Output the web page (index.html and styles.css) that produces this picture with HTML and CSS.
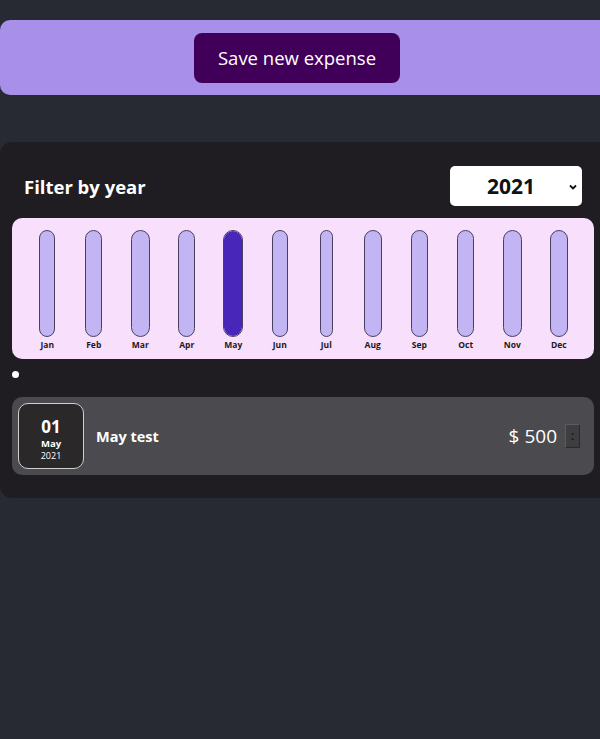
FILE: index.html
```html
<!DOCTYPE html>
<html lang="en">
<head>
<meta charset="utf-8">
<title>Expenses</title>
<link rel="stylesheet" href="styles.css">
</head>
<body>
<div class="new-expense">
  <button class="save-btn" type="button">Save new expense</button>
</div>

<div class="expenses">
  <div class="filter">
    <label class="filter-label">Filter by year</label>
    <div class="select-wrap">
      <select class="year-select">
        <option>2021</option>
      </select>
      <svg class="chev" width="10" height="8" viewBox="0 0 10 8"><path d="M2 2.5 L5 5.5 L8 2.5" fill="none" stroke="#111" stroke-width="1.8"/></svg>
    </div>
  </div>

  <div class="chart">
    <div class="bar"><div class="bar-col"><div class="bar-inner"><div class="bar-fill"></div></div><div class="bar-label">Jan</div></div></div>
    <div class="bar"><div class="bar-col"><div class="bar-inner"><div class="bar-fill"></div></div><div class="bar-label">Feb</div></div></div>
    <div class="bar"><div class="bar-col"><div class="bar-inner"><div class="bar-fill"></div></div><div class="bar-label">Mar</div></div></div>
    <div class="bar"><div class="bar-col"><div class="bar-inner"><div class="bar-fill"></div></div><div class="bar-label">Apr</div></div></div>
    <div class="bar"><div class="bar-col"><div class="bar-inner"><div class="bar-fill full"></div></div><div class="bar-label">May</div></div></div>
    <div class="bar"><div class="bar-col"><div class="bar-inner"><div class="bar-fill"></div></div><div class="bar-label">Jun</div></div></div>
    <div class="bar"><div class="bar-col"><div class="bar-inner"><div class="bar-fill"></div></div><div class="bar-label">Jul</div></div></div>
    <div class="bar"><div class="bar-col"><div class="bar-inner"><div class="bar-fill"></div></div><div class="bar-label">Aug</div></div></div>
    <div class="bar"><div class="bar-col"><div class="bar-inner"><div class="bar-fill"></div></div><div class="bar-label">Sep</div></div></div>
    <div class="bar"><div class="bar-col"><div class="bar-inner"><div class="bar-fill"></div></div><div class="bar-label">Oct</div></div></div>
    <div class="bar"><div class="bar-col"><div class="bar-inner"><div class="bar-fill"></div></div><div class="bar-label">Nov</div></div></div>
    <div class="bar"><div class="bar-col"><div class="bar-inner"><div class="bar-fill"></div></div><div class="bar-label">Dec</div></div></div>
  </div>

  <ul class="list">
    <li class="dot-item"></li>
  </ul>

  <div class="expense-item">
    <div class="date">
      <div class="date-day">01</div>
      <div class="date-month">May</div>
      <div class="date-year">2021</div>
    </div>
    <h2 class="item-title">May test</h2>
    <div class="item-price">$ 500</div>
    <button class="menu-btn" type="button">:</button>
  </div>
</div>
</body>
</html>
```

FILE: styles.css
```css
html, body {
  margin: 0;
  padding: 0;
  overflow: hidden;
}

body {
  background: #282a33;
  font-family: "Open Sans", "Noto Sans", sans-serif;
  width: 600px;
  height: 739px;
}

.new-expense {
  margin-top: 20px;
  width: 620px;
  height: 75px;
  box-sizing: border-box;
  background: #a78fea;
  border-radius: 10px;
  display: flex;
  align-items: center;
  padding-left: 194px;
}

.save-btn {
  width: 206px;
  height: 50px;
  background: #40005a;
  color: #ffffff;
  border: 0;
  border-radius: 8px;
  font-family: inherit;
  font-size: 18.5px;
  cursor: pointer;
}

.expenses {
  margin-top: 47px;
  width: 618px;
  height: 356px;
  box-sizing: border-box;
  background: #1f1d21;
  border-radius: 12px;
  padding: 24px 24px 0 12px;
}

.filter {
  display: flex;
  align-items: center;
  justify-content: space-between;
  padding: 0 12px;
  height: 40px;
}

.filter-label {
  color: #ffffff;
  font-weight: 700;
  font-size: 18.5px;
}

.select-wrap {
  position: relative;
  width: 132px;
  height: 40px;
}

.year-select {
  appearance: none;
  -webkit-appearance: none;
  width: 132px;
  height: 40px;
  border: 0;
  border-radius: 5px;
  background: #ffffff;
  font-family: inherit;
  font-weight: 700;
  font-size: 21px;
  color: #111;
  text-align: center;
  text-align-last: center;
  padding: 0 10px 0 0;
}

.chev {
  position: absolute;
  right: 4px;
  top: 17px;
}

.chart {
  margin-top: 12px;
  height: 141px;
  box-sizing: border-box;
  background: #f8dffc;
  border-radius: 10px;
  padding: 12px 12px 0 12px;
  display: flex;
}

.bar {
  flex: 1;
  display: flex;
  justify-content: center;
}

.bar-col {
  display: flex;
  flex-direction: column;
}

.bar-inner {
  height: 105px;
  border: 1px solid #4a4060;
  border-radius: 12px;
  background: #c3b4f3;
  overflow: hidden;
  display: flex;
  flex-direction: column;
  justify-content: flex-end;
}

.bar-label {
  font-weight: 700;
  font-size: 8.5px;
  color: #1c1a20;
  margin-top: 2px;
  line-height: 11px;
  padding: 0 1px;
  text-align: center;
}

.bar-fill {
  width: 100%;
  height: 0;
  background: #4826b9;
}

.bar-fill.full {
  height: 100%;
}

.list {
  list-style: none;
  margin: 12px 0 0 0;
  padding: 0;
  height: 26px;
}

.dot-item {
  width: 7px;
  height: 7px;
  border-radius: 50%;
  background: #ffffff;
}

.expense-item {
  height: 78px;
  box-sizing: border-box;
  background: #4b4a4e;
  border-radius: 10px;
  padding: 6px 14px 6px 6px;
  display: flex;
  align-items: center;
}

.date {
  width: 66px;
  height: 66px;
  box-sizing: border-box;
  background: #2a2829;
  border: 1px solid #cfcfcf;
  border-radius: 10px;
  padding-top: 6px;
  color: #ffffff;
  display: flex;
  flex-direction: column;
  align-items: center;
  justify-content: center;
}

.date-day {
  font-weight: 700;
  font-size: 17px;
  line-height: 20px;
}

.date-month {
  font-weight: 700;
  font-size: 9.5px;
  line-height: 13px;
}

.date-year {
  font-size: 9px;
  line-height: 12px;
}

.item-title {
  margin: 0 0 0 12px;
  flex: 1;
  color: #ffffff;
  font-size: 14.5px;
  font-weight: 700;
}

.item-price {
  color: #ffffff;
  font-size: 19px;
  margin-right: 8px;
}

.menu-btn {
  width: 15px;
  height: 24px;
  padding: 0;
  background: #3e3d40;
  border: 1px solid #5c5b5e;
  border-bottom-color: #2a292b;
  border-right-color: #2a292b;
  color: #1a1a1a;
  font-size: 12px;
  font-weight: 700;
  line-height: 20px;
}
```
